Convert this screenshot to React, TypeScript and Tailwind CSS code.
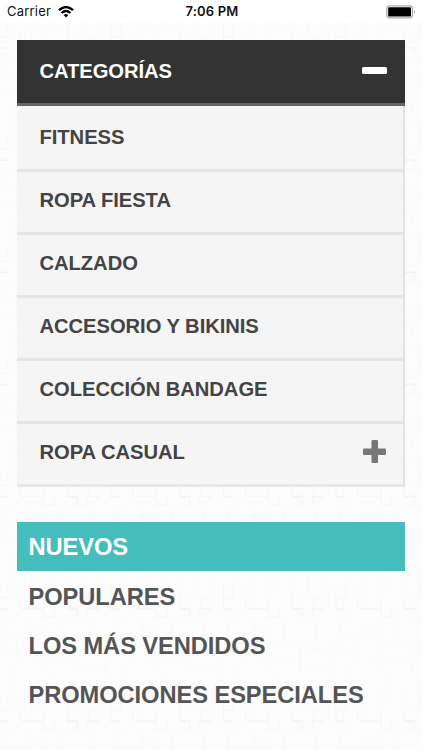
const categories = [
  { name: 'FITNESS' },
  { name: 'ROPA FIESTA' },
  { name: 'CALZADO' },
  { name: 'ACCESORIO Y BIKINIS' },
  { name: 'COLECCIÓN BANDAGE' },
  { name: 'ROPA CASUAL', expandable: true },
];

const collections = ['NUEVOS', 'POPULARES', 'LOS MÁS VENDIDOS', 'PROMOCIONES ESPECIALES'];

function Texture() {
  return (
    <svg className="absolute inset-0 -z-10" width="422" height="750" aria-hidden="true">
      <defs>
        <pattern id="weave" x="-2" y="56.5" width="112.5" height="112.2" patternUnits="userSpaceOnUse" fill="none">
          <path d="M0 2.5h14M27 7.5h21M69 .5h26M5 16.5h31M53 23.5h37M78 31.5h32M0 38.5h22M32 44.5h42M86 51.5h24M9 62.5h39M58 70.5h29M0 79.5h26M38 86.5h31M77 93.5h30" stroke="#f9f9f9" />
          <path d="M4.5 0v26M18.5 12v31M32.5 3v18M47.5 18v36M61.5 0v24M76.5 22v34M93.5 5v29M107.5 24v42M11.5 49v30M26.5 62v37M41.5 70v20M55.5 52v35M70.5 76v31M84.5 62v29M99.5 72v37" stroke="#f9f9f9" />
          <path d="M0.5 80v24h10M22.5 92v11M45.5 92v20h11v-10M68.5 92v11h11v12h10v-12M90.5 92v11M0 92.5h10v-12" stroke="#f5f5f5" />
          <path d="M0 103.5h9M24 103.5h20M69 103.5h10M90 103.5h10" stroke="#efefef" />
        </pattern>
      </defs>
      <rect width="422" height="750" fill="#fcfcfc" />
      <rect width="422" height="750" fill="url(#weave)" />
      <rect width="422" height="23" fill="#fff" />
    </svg>
  );
}

function StatusBar() {
  return (
    <header className="grid h-[23px] grid-cols-3 items-center pl-[7px] pr-[6px] text-[#111]">
      <div className="flex items-center gap-[7px]">
        <span className="font-[Inter,sans-serif] text-[13px] font-normal leading-none tracking-[0.2px]">Carrier</span>
        <svg width="16" height="12" viewBox="0 0 16 12" fill="none" stroke="#000" strokeWidth="2.3">
          <path d="M1 4.2Q8-2 15 4.2M3.6 7Q8 3 12.4 7" />
          <path d="M5.6 9Q8 7 10.4 9L8 11.6Z" fill="#000" stroke="none" />
        </svg>
      </div>
      <span className="pl-px text-center font-[Inter,sans-serif] text-[13px] font-semibold leading-none tracking-[0.2px]">7:06 PM</span>
      <svg className="justify-self-end" width="30" height="14" viewBox="0 0 30 14">
        <rect x=".8" y=".8" width="25.6" height="12" rx="2.8" fill="#fff" stroke="#aaa" strokeWidth="1.3" />
        <rect x="2.2" y="2.2" width="22.8" height="9.2" rx="1.2" />
        <path d="M28 5q1.5 1.8 0 3.6Z" fill="#777" />
      </svg>
    </header>
  );
}

export default function App() {
  return (
    <main className="relative isolate h-[750px] w-[422px] overflow-hidden font-['Liberation_Sans',Arial,sans-serif] font-bold">
      <Texture />
      <StatusBar />
      <nav className="mx-[17px] mt-[17px]">
        <div className="flex h-[66px] items-center justify-between border-b-[3px] border-[#666] bg-[#333] pb-[2px] pl-[22.5px] pr-[18px] text-white">
          <span className="text-[20.2px] leading-6 tracking-[-0.07px]">CATEGORÍAS</span>
          <span className="h-[7px] w-[25px] rounded-[1.5px] bg-white" />
        </div>
        <ul className="border-r-2 border-[#e2e2e2] bg-[#f5f5f5] pt-[3px]">
          {categories.map((item) => (
            <li key={item.name} className="flex h-[63px] items-center justify-between border-b-[3px] border-[#e6e6e6] pb-1 pl-[22.5px] pr-[17px] text-[#444]">
              <span className="text-[20.2px] leading-6 tracking-[-0.05px]">{item.name}</span>
              {item.expandable && (
                <svg className="-mt-px" width="23" height="23" viewBox="0 0 23 23" fill="#777">
                  <rect y="8.5" width="23" height="6.5" rx="1.2" />
                  <rect x="8.5" width="6.5" height="23" rx="1.2" />
                </svg>
              )}
            </li>
          ))}
        </ul>
      </nav>
      <ul className="mx-[17px] mt-[34.5px]">
        {collections.map((name, index) => (
          <li key={name} className={`flex h-[49.4px] items-center pl-[11.5px] pt-[2px] text-[23.7px] leading-7 tracking-[-0.08px] ${index === 0 ? 'bg-[#44bdbc] text-white' : 'text-[#555]'}`}>
            {name}
          </li>
        ))}
      </ul>
    </main>
  );
}
